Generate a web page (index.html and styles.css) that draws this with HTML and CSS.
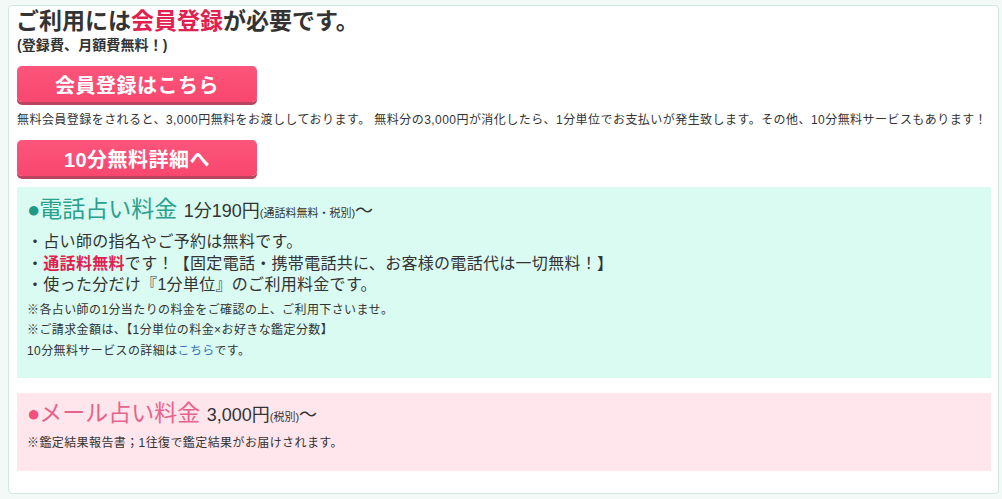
FILE: index.html
```html
<!DOCTYPE html>
<html lang="ja">
<head>
<meta charset="utf-8">
<link rel="stylesheet" href="styles.css">
</head>
<body>
<div class="panel">
  <h1 class="title">ご利用には<span class="red">会員登録</span>が必要です。</h1>
  <p class="sub">(登録費、月額費無料！)</p>
  <a class="btn">会員登録はこちら</a>
  <p class="info">無料会員登録をされると、3,000円無料をお渡ししております。 無料分の3,000円が消化したら、1分単位でお支払いが発生致します。その他、10分無料サービスもあります！</p>
  <a class="btn">10分無料詳細へ</a>
  <section class="box green">
    <h2 class="box-title"><span class="dot">●</span>電話占い料金 <span class="price">1分190円</span><span class="small">(通話料無料・税別)</span><span class="price">〜</span></h2>
    <ul class="list">
      <li>・占い師の指名やご予約は無料です。</li>
      <li>・<strong class="red">通話料無料</strong>です！【固定電話・携帯電話共に、お客様の電話代は一切無料！】</li>
      <li>・使った分だけ『1分単位』のご利用料金です。</li>
    </ul>
    <p class="note">※各占い師の1分当たりの料金をご確認の上、ご利用下さいませ。</p>
    <p class="note">※ご請求金額は、【1分単位の料金×お好きな鑑定分数】</p>
    <p class="note">10分無料サービスの詳細は<a class="link">こちら</a>です。</p>
  </section>
  <section class="box pink">
    <h2 class="box-title"><span class="dot">●</span>メール占い料金 <span class="price">3,000円</span><span class="small">(税別)</span><span class="price">〜</span></h2>
    <p class="note mail-note">※鑑定結果報告書；1往復で鑑定結果がお届けされます。</p>
  </section>
</div>
</body>
</html>
```

FILE: styles.css
```css
html, body {
  margin: 0;
  padding: 0;
}
body {
  background: #f3f9f6;
  font-family: "Liberation Sans", Arial, "Noto Sans CJK JP", sans-serif;
  color: #333;
  width: 1002px;
  height: 499px;
  overflow: hidden;
}
.panel {
  box-sizing: border-box;
  margin: 5px 3px 0 8px;
  height: 489px;
  background: #fff;
  border: 1px solid #cfe8e1;
  border-radius: 4px;
  padding: 1px 7px 0 8px;
}
.title {
  margin: 0 0 0 -1px;
  height: 28px;
  font-size: 23px;
  line-height: 28px;
  font-weight: bold;
  color: #333;
}
.red {
  color: #e2204f;
}
.sub {
  margin: 1px 0 0 0;
  height: 18px;
  font-size: 14px;
  line-height: 18px;
  font-weight: bold;
  letter-spacing: 0.1px;
}
.btn {
  display: flex;
  align-items: center;
  justify-content: center;
  width: 240px;
  height: 36px;
  margin-top: 12px;
  background: linear-gradient(#fc557b, #f8476f);
  border-radius: 5px;
  box-shadow: 0 3px 0 #b9445f;
  color: #fff;
  font-size: 20px;
  font-weight: bold;
  letter-spacing: 0.5px;
  cursor: pointer;
}
.info {
  margin: 9px 0 0 0;
  height: 18px;
  font-size: 12px;
  line-height: 18px;
  letter-spacing: 0.45px;
  white-space: nowrap;
}
.info + .btn {
  margin-top: 11px;
}
.box {
  margin-top: 11px;
  padding: 9px 10px 17px 10px;
}
.green {
  background: #d9fbf2;
}
.pink {
  background: #ffe6ed;
  margin-top: 15px;
  padding: 7px 10px 18px 10px;
}
.box-title {
  margin: 0;
  height: 26px;
  font-size: 23px;
  line-height: 26px;
  font-weight: normal;
  white-space: nowrap;
}
.dot {
  font-size: 22px;
  margin-right: -1px;
}
.green .box-title {
  color: #2aa08e;
}
.green .dot {
  color: #1f9884;
}
.pink .box-title {
  color: #e9628b;
}
.pink .dot {
  color: #f0507a;
}
.price {
  color: #333;
  font-size: 18px;
}
.small {
  color: #333;
  font-size: 11px;
}
.list {
  list-style: none;
  margin: 9px 0 0 0;
  padding: 0;
  font-size: 16px;
  line-height: 21.5px;
  letter-spacing: 0.3px;
}
.list li {
  height: 21.5px;
}
.list strong {
  font-weight: bold;
}
.note {
  margin: 0;
  height: 20.5px;
  font-size: 12px;
  line-height: 20.5px;
  letter-spacing: 0.4px;
}
.list + .note {
  margin-top: 4px;
}
.mail-note {
  margin-top: 7px;
  height: 20px;
  line-height: 20px;
}
.link {
  color: #3c72b5;
  cursor: pointer;
}
```
